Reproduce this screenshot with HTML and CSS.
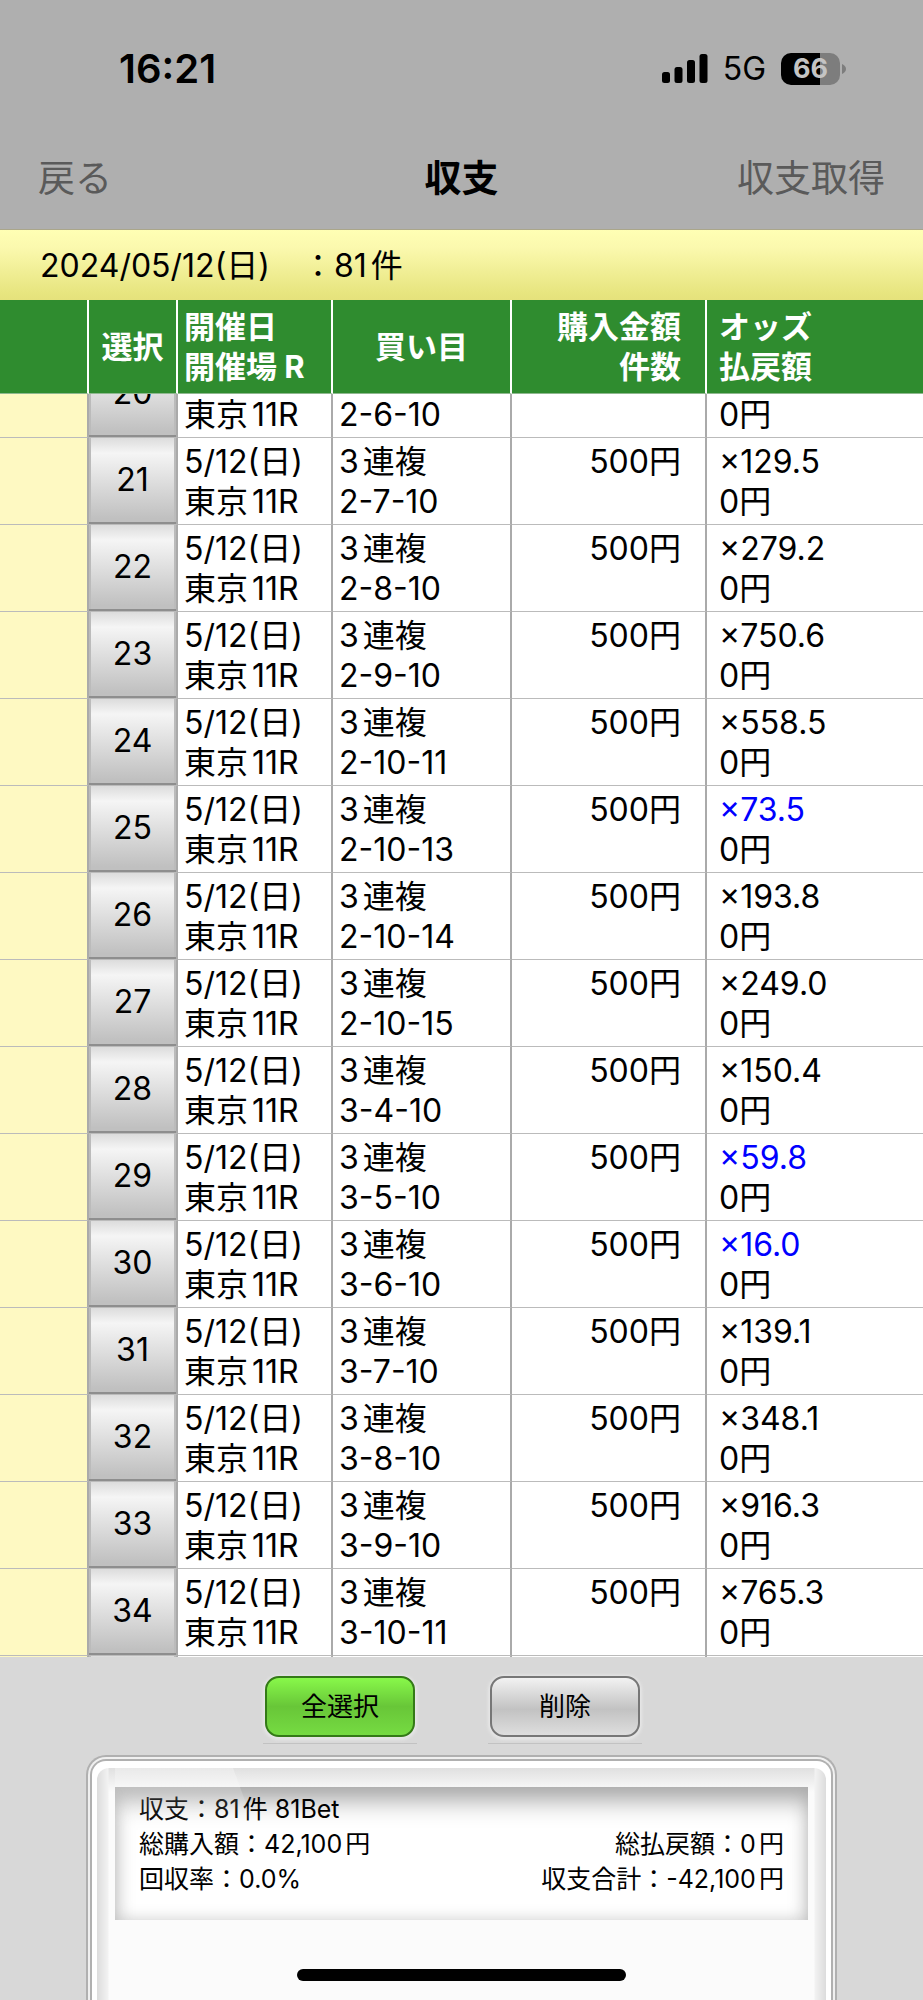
FILE: index.html
```html
<!DOCTYPE html>
<html lang="ja">
<head>
    <meta charset="UTF-8">
    <meta name="viewport" content="width=device-width, initial-scale=1.0">
    <title>収支</title>
    <link rel="stylesheet" href="styles.css">
</head>
<body>
    <!-- Status bar -->
    <div class="status">
        <span class="clock">16:21</span>
        <div class="status-right">
            <svg class="signal" width="46" height="30" viewBox="0 0 46 30" aria-hidden="true">
                <rect x="0" y="18" width="8" height="11" rx="2.5"/>
                <rect x="12.5" y="13" width="8" height="16" rx="2.5"/>
                <rect x="25" y="6" width="8" height="23" rx="2.5"/>
                <rect x="37.5" y="0" width="8" height="29" rx="2.5"/>
            </svg>
            <span class="network">5G</span>
            <div class="battery"><span>66</span></div>
            <svg width="4" height="10" viewBox="0 0 4 10" aria-hidden="true"><path d="M0 0Q4 2 4 5T0 10Z" fill="#7d7d7d"/></svg>
        </div>
    </div>

    <!-- Title bar -->
    <header class="navbar">
        <button type="button">戻る</button>
        <h1>収支</h1>
        <button type="button">収支取得</button>
    </header>

    <div class="summary">2024/05/12(日)　：81件</div>

    <!-- Bet list -->
    <table>
        <thead>
            <tr>
                <th></th>
                <th class="center">選択</th>
                <th>開催日<br>開催場 R</th>
                <th class="center">買い目</th>
                <th class="right">購入金額<br>件数</th>
                <th class="odds">オッズ<br>払戻額</th>
            </tr>
        </thead>
        <tbody id="rows"></tbody>
    </table>

    <footer class="footer">
        <div class="actions">
            <div class="key"><button type="button" class="btn green">全選択</button></div>
            <div class="key"><button type="button" class="btn">削除</button></div>
        </div>
        <div class="panel">
            <div class="panel-inner">
                <div class="surface">
                    <div class="lcd">
                        <div><span>収支：81件 81Bet</span></div>
                        <div><span>総購入額：42,100円</span><span>総払戻額：0円</span></div>
                        <div><span>回収率：0.0%</span><span>収支合計：-42,100円</span></div>
                    </div>
                </div>
            </div>
        </div>
        <div class="home-bar"></div>
    </footer>

    <script>
        const bets = [
            [20, "2-6-10", ""],
            [21, "2-7-10", "129.5"],
            [22, "2-8-10", "279.2"],
            [23, "2-9-10", "750.6"],
            [24, "2-10-11", "558.5"],
            [25, "2-10-13", "73.5"],
            [26, "2-10-14", "193.8"],
            [27, "2-10-15", "249.0"],
            [28, "3-4-10", "150.4"],
            [29, "3-5-10", "59.8"],
            [30, "3-6-10", "16.0"],
            [31, "3-7-10", "139.1"],
            [32, "3-8-10", "348.1"],
            [33, "3-9-10", "916.3"],
            [34, "3-10-11", "765.3"]
        ];

        // odds under 100 are shown in blue
        const rows = bets.map(([no, bet, odds]) => `
            <tr>
                <td class="mark"></td>
                <td class="no"><button type="button">${no}</button></td>
                <td class="spaced">5/12(日)<br>東京11R</td>
                <td class="spaced">3連複<br>${bet}</td>
                <td class="right">500円</td>
                <td class="odds"><span class="${odds && odds < 100 ? "low" : ""}">${odds ? "×" + odds : ""}</span><br>0円</td>
            </tr>`).join("");
        const blank = `<tr><td class="mark"></td><td class="no"><button type="button" aria-label="35"></button></td><td></td><td></td><td></td><td></td></tr>`;

        const list = document.getElementById("rows");
        list.innerHTML = rows + blank;
        list.scrollTop = 43;
    </script>
</body>
</html>
```
FILE: styles.css
```css
* { box-sizing: border-box; }
body {
    margin: 0;
    height: 100vh;
    display: flex;
    flex-direction: column;
    background: #d8d8d8;
    color: #000;
    font-family: Inter, "Noto Sans CJK JP", sans-serif;
    font-size: 32px;
    line-height: 40px;
    text-autospace: no-autospace;
}
button { font: inherit; color: inherit; border: 0; padding: 0; background: none; }

.status { display: flex; justify-content: space-between; align-items: center; height: 138px; padding: 0 77px 0 119px; background: #afafaf; }
.clock { font-size: 40px; font-weight: 600; }
.status-right { display: flex; align-items: center; }
.network { margin: 0 15px; }
.battery { width: 59px; height: 32px; margin-right: 2px; border-radius: 10px; background: linear-gradient(90deg, #000 66%, #7d7d7d 66%); color: #c4c4c4; font-size: 27px; font-weight: 700; line-height: 32px; text-align: center; }

.navbar { display: grid; grid-template-columns: 1fr auto 1fr; align-items: center; height: 92px; padding: 0 38px 10px; background: #afafaf; border-bottom: 1px solid #aaa68a; font-size: 37px; }
.navbar h1 { margin: 0; font-size: 37px; }
.navbar button { color: #5a5a5a; justify-self: start; }
.navbar button:last-child { justify-self: end; }

.summary { height: 70px; padding: 16px 40px; background: linear-gradient(#ffffb4, #fbf9ae 25%, #e7e57f 90%, #e5e27c); white-space: nowrap; }
.summary, .spaced, .lcd { text-autospace: normal; }

/* header stays put, only the body scrolls */
table { flex: 1; min-height: 0; display: flex; flex-direction: column; background: #fff; }
tbody { flex: 1; min-height: 0; display: block; overflow: auto; scrollbar-width: none; }
thead { display: block; }
tr { display: grid; grid-template-columns: 89px 89px 155px 179px 195px 1fr; }
th { height: 94px; padding: 0 6px; align-content: center; background: #2f8c2f; color: #fff; border-right: 2px solid #fff; border-bottom: 1px solid #8fb88f; text-align: left; font-size: 31px; white-space: nowrap; }
td { height: 87px; padding: 4px 6px 0; border-right: 2px solid #aaa; border-bottom: 1px solid #bbb; white-space: nowrap; }
th:last-child, td:last-child { border-right: 0; }
.center { text-align: center; }
.right { text-align: right; padding-right: 24px; }
.odds { padding-left: 12px; }
.low { color: #00f; }
.mark { background: #fef9c2; }
.no { padding: 0; }
.no button { display: block; width: 100%; height: 86px; background: linear-gradient(#dcdcdc, #f5f5f5 18%, #c0c0c0 96%); border-bottom: 2px solid #8e8e8e; box-shadow: inset 2px 0 #bbb, inset -2px 0 #bbb; }

.footer { height: 343px; display: flex; flex-direction: column; align-items: center; overflow: hidden; }
.actions { display: flex; gap: 71px; padding: 19px 18px 11px 0; }
.key { padding: 0 2px 6px; border-bottom: 1px solid #c2c2c2; }
.btn { display: block; width: 150px; height: 61px; border: 2px solid #777; border-radius: 14px; background: linear-gradient(#f2f2f2, #c2c2c2 55%, #dedede); box-shadow: 0 1px 3px 2px #e6e6e6; font-size: 26px; }
.green { border-color: #347a17; background: linear-gradient(#88f84a, #68c638 50%, #76db42); }

.panel { width: calc(100% - 172px); flex: 1; padding: 2px 2px 0; border: 2px solid #b0b0b0; border-bottom: 0; border-radius: 20px 20px 0 0; background: #f0f0f0; }
.panel-inner { height: 100%; padding: 7px 5px 0; border: 2px solid #b0b0b0; border-bottom: 0; border-radius: 16px 16px 0 0; background: #fff; }
.surface { position: relative; height: 100%; padding: 19px 18px 0; border-radius: 12px 12px 0 0; background: linear-gradient(90deg, #dcdcdc, #f2f2f2 11px, transparent 12px calc(100% - 12px), #f2f2f2 calc(100% - 11px), #dcdcdc), linear-gradient(#e0e0e0, #fbfbfb 24px); }
.surface::before { content: ""; position: absolute; top: 0; left: 18px; width: 140px; height: 60px; clip-path: polygon(0 0, 118px 0, 140px 100%, 0 100%); background: linear-gradient(rgba(255, 255, 255, .3), transparent); }
.lcd { height: 133px; padding: 5px 24px; background: #fff; box-shadow: inset 0 20px 24px -6px #aaa, inset 0 0 16px #ccc; font-size: 25px; line-height: 35px; }
.lcd div { display: flex; justify-content: space-between; }

.home-bar { position: absolute; bottom: 19px; left: 50%; width: 329px; height: 12px; margin-left: -165px; border-radius: 6px; background: #000; }
```
